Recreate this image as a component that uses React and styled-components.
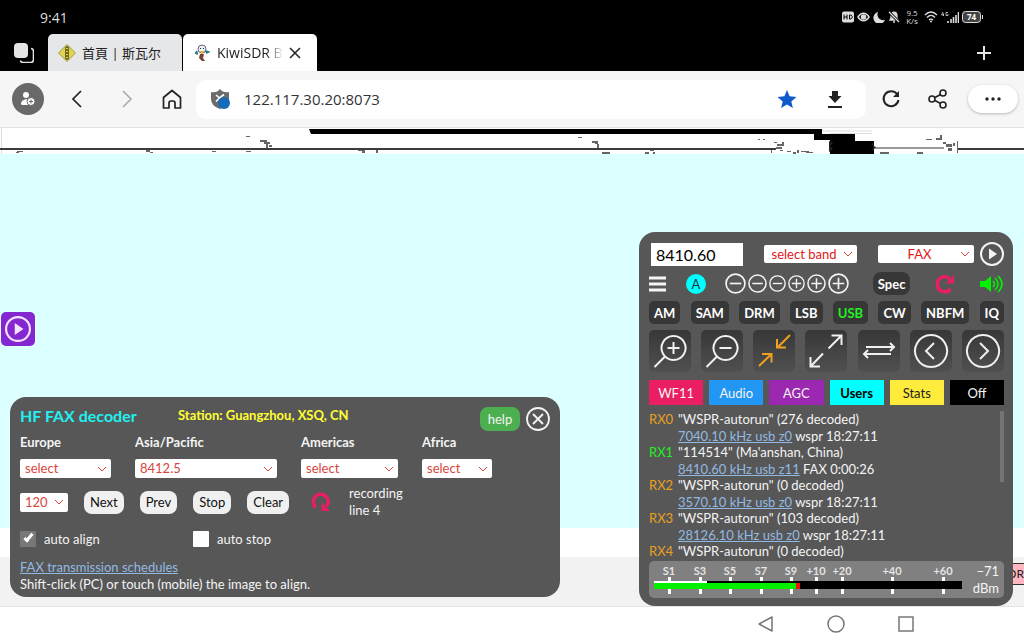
import React, { useState } from "react";
import styled, { createGlobalStyle, css } from "styled-components";

const theme = {
  colors: {
    panel: "#575757",
    dark: "#373737",
    image: "#dcffff",
    link: "#92b9e2",
    select: "#d8453c",
    pink: "#e91e63",
    orange: "#f0a020",
    green: "#22f022"
  },
  ui: '"Lato", "Liberation Sans", sans-serif',
  browser: '"Open Sans", "Noto Sans CJK TC", sans-serif'
};

const GlobalStyle = createGlobalStyle`
  *, *::before, *::after { box-sizing: border-box; }
  body { margin: 0; background: #fff; }
  button, input, select { font: inherit; margin: 0; }
  button { border: 0; padding: 0; background: none; color: inherit; }
  svg { display: block; flex: none; }
`;

const Page = styled.div`
  min-height: 100vh;
  display: flex;
  flex-direction: column;
  font-family: ${theme.ui};
  font-size: 13px;
`;

/* ---- phone and browser chrome ---- */

const StatusBar = styled.div`
  height: 34px;
  padding: 0 40px;
  display: flex;
  align-items: center;
  justify-content: space-between;
  background: #000;
  color: #ddd;
  font-family: ${theme.browser};
`;

const Clock = styled.span`
  font-size: 14px;
`;

const StatusIcons = styled.div`
  display: flex;
  align-items: center;
  gap: 3px;
`;

const Speed = styled.span`
  width: 18px;
  font-size: 8px;
  line-height: 8px;
  text-align: center;
`;

const TabStrip = styled.div`
  height: 37px;
  padding: 0 32px 0 14px;
  display: flex;
  align-items: center;
  background: #000;
  color: #e4e4e4;
`;

const Tabs = styled.div`
  flex: 1;
  align-self: stretch;
  display: flex;
  gap: 1px;
  padding-left: 14px;
`;

const Tab = styled.div`
  width: 134px;
  display: flex;
  align-items: center;
  gap: 6px;
  padding: 0 16px 0 10px;
  border-radius: 5px 5px 0 0;
  background: ${props => (props.$active ? "#fff" : "#e6e7e9")};
  color: #222;
  font-family: ${theme.browser};
  font-size: ${props => (props.$active ? 14 : 13)}px;
`;

const TabTitle = styled.span`
  flex: 1;
  overflow: hidden;
  white-space: nowrap;
  ${props =>
    props.$fade &&
    css`
      mask-image: linear-gradient(90deg, #000 75%, transparent);
    `}
`;

const Toolbar = styled.div`
  height: 57px;
  padding: 0 6px 0 12px;
  display: flex;
  align-items: center;
  background: #f6f6f6;
  color: #222;
  border-bottom: 1px solid #e2e2e2;
`;

const NavButtons = styled.div`
  display: flex;
  align-items: center;
  gap: 26px;
  padding-right: 14px;
`;

const Avatar = styled.button`
  width: 32px;
  height: 32px;
  display: grid;
  place-items: center;
  border-radius: 50%;
  background: #696969;
  color: #fff;
`;

const AddressBar = styled.div`
  flex: 1;
  height: 39px;
  padding: 0 20px 0 14px;
  display: flex;
  align-items: center;
  gap: 14px;
  border-radius: 10px;
  background: #fff;
`;

const Address = styled.input`
  flex: 1;
  min-width: 0;
  border: 0;
  padding: 0;
  color: #333;
  background: none;
  font-family: ${theme.browser};
  font-size: 15px;
`;

const AddressActions = styled.div`
  display: flex;
  gap: 26px;
`;

const PageActions = styled.div`
  display: flex;
  align-items: center;
  gap: 27px;
  padding: 0 20px 0 15px;
`;

const MoreButton = styled.button`
  width: 50px;
  height: 28px;
  display: grid;
  place-items: center;
  border-radius: 14px;
  background: #fff;
  box-shadow: 0 1px 3px rgba(0, 0, 0, 0.25);
`;

const SystemNav = styled.nav`
  height: 34px;
  padding-right: 109px;
  display: flex;
  align-items: center;
  justify-content: flex-end;
  gap: 52px;
  color: #777;
  background: #fff;
  border-top: 1px solid #e4e4e4;
`;

/* ---- receiver page ---- */

const Receiver = styled.main`
  position: relative;
  flex: 1;
  min-height: 478px;
  display: flex;
  flex-direction: column;
  overflow: hidden;
`;

const FaxImage = styled.div`
  flex: 1;
  background: ${theme.colors.image};
`;

const Scale = styled.div`
  height: ${props => props.$height}px;
  background: ${props => props.$color};
`;

const PlayTab = styled.button`
  position: absolute;
  left: 1px;
  top: 184px;
  width: 34px;
  height: 34px;
  display: grid;
  place-items: center;
  border-radius: 5px;
  background: #8427d0;
  color: #f4e4ff;
`;

const BandLabel = styled.span`
  position: absolute;
  right: 0;
  bottom: 21px;
  border: solid #333;
  border-width: 1px 0;
  background: #ffb6c1;
  color: #222;
  font-size: 12px;
  line-height: 20px;
`;

const Panel = styled.section`
  position: absolute;
  border-radius: 16px;
  background: ${theme.colors.panel};
  color: #f4f4f4;
`;

const FaxPanel = styled(Panel)`
  left: 10px;
  bottom: 9px;
  width: 550px;
  padding: 10px 10px 4px;
`;

const FaxHeader = styled.header`
  display: grid;
  grid-template-columns: 158px 1fr auto auto;
  gap: 0 6px;
  height: 24px;
`;

const FaxTitle = styled.h1`
  margin: 0;
  color: #22f0f0;
  font-size: 16px;
  line-height: 18px;
`;

const Station = styled.strong`
  margin-left: -6px;
  color: #ffff33;
  line-height: 16px;
`;

const HelpButton = styled.button`
  width: 40px;
  height: 24px;
  border-radius: 8px;
  background: #4caf50;
`;

const Regions = styled.div`
  display: flex;
  gap: 24px;
  padding-top: 3px;
`;

const Region = styled.label`
  width: ${props => props.$width}px;
  display: flex;
  flex-direction: column;
  gap: 8px;
  font-weight: bold;
  line-height: 17px;
`;

const SelectBox = styled.span`
  display: grid;
  align-items: center;
  width: ${props => (props.$width ? `${props.$width}px` : "auto")};
  color: ${theme.colors.select};
  font-weight: normal;

  > * {
    grid-area: 1 / 1;
  }

  svg {
    justify-self: end;
    margin-right: 4px;
    pointer-events: none;
  }
`;

const SelectControl = styled.select`
  appearance: none;
  width: 100%;
  height: ${props => (props.$slim ? 18 : 19)}px;
  padding: 0 ${props => (props.$slim ? 18 : 5)}px 0 5px;
  border: 0;
  border-radius: 2px;
  background: #fff;
  color: ${props => (props.$slim ? "#e01818" : "inherit")};
  text-align-last: ${props => (props.$slim ? "center" : "left")};
`;

const FaxControls = styled.div`
  display: flex;
  align-items: center;
  gap: 16px;
  height: 34px;
  margin-top: 7px;
`;

const PillButton = styled.button`
  height: 23px;
  padding: 0 6px;
  border-radius: 8px;
  background: #f0f0f0;
  color: #111;
`;

const Progress = styled.div`
  display: flex;
  align-items: center;
  gap: 17px;
  padding-left: 5px;
  line-height: 17px;
`;

const Options = styled.div`
  display: grid;
  grid-template-columns: 173px 1fr;
  margin-top: 12px;
`;

const Option = styled.label`
  display: flex;
  align-items: center;
  gap: 8px;
  line-height: 16px;
`;

const Checkbox = styled.input`
  appearance: none;
  width: 16px;
  height: 16px;
  border-radius: 1px;
  background: #fff;

  &:checked {
    background: #787878;
  }

  &:checked::before {
    content: "";
    display: block;
    width: 5px;
    height: 10px;
    margin: 1px 6px;
    border: solid #fff;
    border-width: 0 3px 3px 0;
    transform: rotate(40deg);
  }
`;

const Link = styled.a`
  color: ${theme.colors.link};
  text-decoration: underline;
`;

const Notes = styled.p`
  margin: 12px 0 0;
  line-height: 17px;
`;

const ControlPanel = styled(Panel)`
  right: 11px;
  bottom: 0;
  width: 374px;
  padding: 10px 9px 8px 10px;
`;

const ControlRow = styled.div`
  display: flex;
  align-items: center;
  justify-content: space-between;
  margin-bottom: ${props => props.$space || 6}px;
`;

const FrequencyInput = styled.input`
  width: 92px;
  height: 23px;
  margin: 0 0 0 2px;
  padding: 0 5px;
  border: 0;
  background: #fff;
  color: #000;
  font-size: 16px;
`;

const ControlGroup = styled.div`
  display: flex;
  align-items: center;
  gap: ${props => props.$gap}px;
`;

const AutoButton = styled.button`
  width: 20px;
  height: 20px;
  border-radius: 50%;
  background: #00ffff;
  color: #234;
`;

const DarkButton = styled.button`
  height: 23px;
  padding: 0 5px;
  border-radius: ${props => (props.$round ? 8 : 5)}px;
  background: ${theme.colors.dark};
  color: ${props => (props.$on ? theme.colors.green : "#fff")};
  font-weight: bold;
`;

const ToolButton = styled.button`
  width: 42px;
  height: 42px;
  display: grid;
  place-items: center;
  border-radius: 5px;
  background: linear-gradient(#373737, #505050);
  color: ${props => (props.$on ? theme.colors.orange : "#f0f0f0")};
`;

const PanelTabs = styled.div`
  display: grid;
  grid-template-columns: repeat(6, 1fr);
  gap: 6px;
  margin-bottom: 6px;
`;

const PanelTab = styled.button`
  height: 25px;
  background: ${props => props.$bg};
  color: ${props => props.$color || "#f4f4f4"};
  font-weight: ${props => (props.$on ? "bold" : "normal")};
`;

const UserList = styled.ul`
  position: relative;
  height: 150px;
  margin: 0;
  padding: 0;
  list-style: none;
  overflow: hidden;

  &::after {
    content: "";
    position: absolute;
    top: 0;
    right: 0;
    width: 4px;
    height: 71px;
    background: #747474;
  }
`;

const User = styled.li`
  display: grid;
  grid-template-columns: 29px 1fr;
  grid-template-rows: 17px 16px;
  line-height: 17px;
`;

const Channel = styled.span`
  color: ${props => (props.$self ? theme.colors.green : "#e8a020")};
`;

const UserDetail = styled.span`
  grid-column: 2;
`;

const Meter = styled.div`
  display: flex;
  align-items: center;
  justify-content: space-between;
  height: 37px;
  padding: 0 5px;
  border-radius: 5px;
  background: #808080;
`;

const MeterValue = styled.div`
  line-height: 17px;
  text-align: right;
`;

/* ---- icons ---- */

const Icon = ({ size = 20, width, height, box, stroke = 2, fill = "none", children }) => (
  <svg
    width={width || size}
    height={height || size}
    viewBox={box || `0 0 ${width || size} ${height || size}`}
    fill={fill}
    stroke={stroke ? "currentColor" : "none"}
    strokeWidth={stroke || 1}
    aria-hidden="true"
  >
    {children}
  </svg>
);

const Chevron = () => (
  <Icon width={10} height={8} stroke={1}>
    <path d="M1 2l4 4 4-4" />
  </Icon>
);

const PlayCircle = ({ size = 24 }) => (
  <Icon size={size} box="0 0 24 24">
    <circle cx="12" cy="12" r="11" />
    <path d="M9 6.500l8 5.500-8 5.500z" fill="currentColor" stroke="none" />
  </Icon>
);

const RestartIcon = ({ turned }) => (
  <Icon size={22} stroke={0}>
    <g transform={turned ? "rotate(90 11 11)" : undefined}>
      <path d="M15.500 5.500a7.500 7.500 0 1 0 1 10.500" stroke={theme.colors.pink} strokeWidth="3.600" />
      <path d="M20 2v8.500h-8.500z" fill={theme.colors.pink} />
    </g>
  </Icon>
);

const StepIcon = ({ size, plus }) => (
  <Icon size={size} stroke={1.6} box="0 0 20 20">
    <circle cx="10" cy="10" r="9" />
    <path d={plus ? "M4.500 10h11M10 4.500v11" : "M4.500 10h11"} />
  </Icon>
);

const toolIcons = {
  "zoom in": <path d="M13 23.500L2.500 34M15.500 15h12M21.500 9v12M21.500 3a12 12 0 1 0 .1 0z" />,
  "zoom out": <path d="M13 23.500L2.500 34M15.500 15h12M21.500 3a12 12 0 1 0 .1 0z" />,
  "max in": <path d="M34 2L21.500 14.500M21 6v8.500h9M3 33l12.500-12M6 21h9.500v8.500" />,
  "max out": <path d="M20.500 15.500L33.500 2.500M23.500 2.500h10V12M15 20.500L3 33M2.500 24v9.500H12" />,
  passband: <path d="M5 14h28M29 10l4 4-4 4M30 21H3M7 17l-4 4 4 4" />,
  left: <path d="M18 2a16 16 0 1 0 .1 0zM21 10l-8 8 8 8" />,
  right: <path d="M18 2a16 16 0 1 0 .1 0zM15 10l8 8-8 8" />
};

const StatusGlyphs = () => (
  <StatusIcons>
    <Icon size={12} stroke={0}>
      <rect width="12" height="11" y=".5" rx="2" fill="#ddd" />
      <path d="M2 3.500v5M5 3.500v5M2 6h3M7.500 4v4h.5c3 0 3-4 0-4z" stroke="#000" />
    </Icon>
    <Icon width={13} height={12} stroke={1.5}>
      <path d="M1 6c3-5 8-5 11 0-3 5-8 5-11 0z" />
      <circle cx="6.500" cy="6" r="2" fill="currentColor" />
    </Icon>
    <Icon size={12} stroke={0}>
      <path d="M5 1a6 6 0 1 0 7 8C7 10 3 6 5 1z" fill="currentColor" />
    </Icon>
    <Icon size={12} stroke={1.3}>
      <path d="M2 9l1-2V5c0-5 6-5 6 0v2l1 2z" fill="currentColor" />
      <path d="M1 1l10 10" stroke="#000" strokeWidth="3" />
      <path d="M1 1l10 10M5 11h2" />
    </Icon>
    <Speed>9.5 K/s</Speed>
    <Icon width={14} height={12} stroke={1.4}>
      <path d="M1 4c4-4 8-4 12 0M3 6.500c3-3 5-3 8 0M5 9c1-1 3-1 4 0" />
      <circle cx="7" cy="10.500" r="1" fill="currentColor" stroke="none" />
    </Icon>
    <Icon width={18} height={12} stroke={1.6}>
      <path d="M7 12v-2M10 12V8M12.500 12V6M15 12V4M17.500 12V1" />
      <path d="M2 1L.5 4H3M2.500 2.500V5M7 1.500H5V4.500h2V3" strokeWidth=".8" />
    </Icon>
    <Icon width={22} height={12} stroke={0}>
      <rect x=".5" y=".5" width="18" height="11" rx="3" fill="#444" stroke="currentColor" />
      <text x="9.500" y="9" fill="#fff" fontSize="8" fontWeight="bold" textAnchor="middle">
        74
      </text>
      <path d="M20.500 4v4" stroke="currentColor" />
    </Icon>
  </StatusIcons>
);

const specks = [
  [246, 8, 4, 1], [260, 12, 7, 2], [264, 14, 6, 2], [266, 16, 2, 4], [269, 17, 3, 2],
  [17, 23, 6, 1], [16, 24, 3, 1], [146, 22, 4, 2], [150, 24, 3, 1], [212, 23, 4, 1],
  [246, 23, 5, 1], [358, 22, 7, 1], [362, 23, 3, 2], [376, 22, 2, 3], [578, 9, 4, 1],
  [592, 13, 6, 2], [595, 15, 3, 1], [597, 16, 2, 4], [602, 24, 8, 2], [645, 24, 4, 2],
  [650, 22, 4, 1], [653, 24, 2, 2], [758, 11, 2, 1], [763, 11, 2, 1], [774, 14, 3, 1],
  [777, 16, 5, 2], [782, 14, 2, 4], [776, 19, 6, 2], [771, 22, 1, 3], [780, 22, 3, 1],
  [787, 23, 4, 1], [793, 24, 3, 2], [797, 22, 2, 3], [801, 23, 8, 1], [806, 24, 7, 1],
  [880, 24, 9, 2], [917, 24, 6, 2], [926, 11, 6, 1], [936, 10, 6, 2], [940, 7, 2, 4],
  [943, 14, 3, 2], [946, 16, 6, 3], [953, 15, 2, 3], [948, 20, 4, 3], [957, 13, 1, 12]
];

const FaxStrip = () => (
  <svg width="100%" height="26" viewBox="0 0 1024 26" preserveAspectRatio="none" aria-hidden="true">
    <rect width="1024" height="26" fill="#fefefe" />
    <path d="M1.500 0v26M822 3h50M830 5.500h42" stroke="#ddd" />
    <path d="M0 21h776M958 21h66" stroke="#3c3c3c" strokeWidth="2" />
    <path d="M874 20h70" stroke="#999" strokeWidth="2" />
    <path d="M309 1h513v5h33v7h19v13h-44V12h-16V6H311z" fill="#000" />
    <path d="M829 13l4 2-3 3 3 3-4 3zM874 14l-3 3 5 2-4 4z" fill="#222" />
    {specks.map(([x, y, w, h]) => (
      <rect key={`${x}-${y}`} x={x} y={y} width={w} height={h} fill="#666" />
    ))}
  </svg>
);

const ticks = [
  ["S1", 15], ["S3", 46], ["S5", 76], ["S7", 107], ["S9", 137],
  ["+10", 162], ["+20", 188], ["+40", 238], ["+60", 289]
];

const SMeter = () => (
  <svg width="309" height="37" viewBox="0 0 309 37" role="img" aria-label="S-meter">
    {ticks.map(([label, x]) => (
      <g key={label}>
        <text x={x} y="14" fill="#e4e4e4" fontSize="11" fontWeight="bold" textAnchor="middle">
          {label}
        </text>
        <path d={`M${x + 0.5} 16v17`} stroke="#fff" strokeWidth="3" />
      </g>
    ))}
    <rect y="20" width="308" height="8" fill="#000" />
    <rect y="20" width="53" height="2" fill="#fff" />
    <rect y="22" width="142" height="6" fill="#00f000" />
    <rect x="142" y="22" width="4" height="6" fill="#f01010" />
  </svg>
);

/* ---- data ---- */

const regions = [
  { name: "Europe", value: "select", width: 91 },
  { name: "Asia/Pacific", value: "8412.5", width: 142 },
  { name: "Americas", value: "select", width: 97 },
  { name: "Africa", value: "select", width: 70 }
];

const modes = ["AM", "SAM", "DRM", "LSB", "USB", "CW", "NBFM", "IQ"];

const steps = [
  { size: 21 }, { size: 19 }, { size: 17 },
  { size: 17, plus: true }, { size: 19, plus: true }, { size: 21, plus: true }
];

const panelTabs = [
  { name: "WF11", bg: "#e91e63" },
  { name: "Audio", bg: "#2196f3" },
  { name: "AGC", bg: "#9c27b0" },
  { name: "Users", bg: "#00ffff", color: "#000" },
  { name: "Stats", bg: "#ffeb3b", color: "#222" },
  { name: "Off", bg: "#000" }
];

const users = [
  { name: '"WSPR-autorun" (276 decoded)', freq: "7040.10 kHz usb z0", info: "wspr 18:27:11" },
  { name: '"114514" (Ma\'anshan, China)', freq: "8410.60 kHz usb z11", info: "FAX 0:00:26", self: true },
  { name: '"WSPR-autorun" (0 decoded)', freq: "3570.10 kHz usb z0", info: "wspr 18:27:11" },
  { name: '"WSPR-autorun" (103 decoded)', freq: "28126.10 kHz usb z0", info: "wspr 18:27:11" },
  { name: '"WSPR-autorun" (0 decoded)' }
];

/* ---- components ---- */

const Select = ({ value, width, slim, label }) => (
  <SelectBox $width={width}>
    <SelectControl defaultValue={value} $slim={slim} aria-label={label}>
      <option>{value}</option>
    </SelectControl>
    <Chevron />
  </SelectBox>
);

const Browser = () => (
  <>
    <StatusBar>
      <Clock>9:41</Clock>
      <StatusGlyphs />
    </StatusBar>
    <TabStrip>
      <Icon size={20} stroke={1.6}>
        <path d="M17 5.500q2.500 0 2.500 3v8q0 3-3 3h-7q-3 0-3-2" />
        <rect width="14" height="15" rx="4" fill="currentColor" stroke="none" />
      </Icon>
      <Tabs>
        <Tab>
          <Icon size={18} stroke={0}>
            <path d="M9 .5L17.500 9 9 17.500.5 9z" fill="#e2d44e" stroke="#a39a48" />
            <rect x="7" y="2" width="4" height="14" rx="2" fill="#6e6a22" />
            <path d="M8 4.500h2M8 7.500h2M8 10.500h2M8 13.500h2" stroke="#e2d44e" />
          </Icon>
          <TabTitle>首頁 | 斯瓦尔</TabTitle>
        </Tab>
        <Tab $active>
          <Icon size={18} stroke={0}>
            <circle cx="9" cy="5" r="4" fill="#e9f1f4" stroke="#667" />
            <path d="M4 7l-1 2 2 1M12 7l3 1-2 1" stroke="#378" strokeWidth="2" />
            <path d="M7 4.500h1M10 4.500h1" stroke="#222" />
            <path d="M7 7h4l-1 3H8z" fill="#e5b341" />
            <path d="M7 10h4l-1 4 2 3H9l-3-3z" fill="#764236" />
          </Icon>
          <TabTitle $fade>KiwiSDR B</TabTitle>
          <button aria-label="Close tab">
            <Icon size={12} stroke={1.5}>
              <path d="M1 1l10 10M11 1L1 11" />
            </Icon>
          </button>
        </Tab>
      </Tabs>
      <button aria-label="New tab">
        <Icon size={16}>
          <path d="M1 8h14M8 1v14" />
        </Icon>
      </button>
    </TabStrip>
    <Toolbar>
      <NavButtons>
        <Avatar aria-label="Profile">
          <Icon size={16} stroke={0}>
            <circle cx="6" cy="4" r="3" fill="currentColor" />
            <path d="M1 13c0-6 10-6 10-2v3H3q-2 0-2-1z" fill="currentColor" />
            <circle cx="11" cy="10.500" r="4" fill="currentColor" stroke="#696969" />
            <path d="M11 8.500v4M9 10.500h4" stroke="#696969" />
          </Icon>
        </Avatar>
        <button aria-label="Back">
          <Icon size={20} stroke={1.7}>
            <path d="M11 2L3 10l8 8" />
          </Icon>
        </button>
        <button aria-label="Forward">
          <Icon size={20} stroke={0}>
            <path d="M7 2l8 8-8 8" stroke="#aaa" strokeWidth="1.600" />
          </Icon>
        </button>
        <button aria-label="Home">
          <Icon size={20} stroke={1.7}>
            <path d="M1.500 8.500L10 1.500l8.500 7V19h-5.500v-5q0-2-2-2h-2q-2 0-2 2v5H1.500z" strokeLinejoin="round" />
          </Icon>
        </button>
      </NavButtons>
      <AddressBar>
        <Icon width={20} height={22} stroke={0}>
          <path d="M10 1l2 2q3 2 7 1v7q0 7-9 10-9-3-9-10V4q4 1 7-1z" fill="#6b6b6b" />
          <path d="M6 7l3.500 3L14 6.500M9.500 10L6 13.500" stroke="#fff" strokeWidth="1.600" />
          <circle cx="14" cy="15" r="6" fill="#1769ba" />
        </Icon>
        <Address aria-label="Address" defaultValue="122.117.30.20:8073" />
        <AddressActions>
          <button aria-label="Favorite">
            <Icon width={22} height={20} stroke={0}>
              <path d="M11 1l2.600 6.300 6.900.6-5.200 4.500 1.600 6.600-5.900-3.500L5.100 19l1.600-6.600L1.500 7.900l6.900-.6z" fill="#0f5bcb" />
            </Icon>
          </button>
          <button aria-label="Downloads">
            <Icon width={22} height={20} stroke={0} fill="currentColor">
              <path d="M8 2h6v5h3.500L11 14 4.500 7H8zM4 17h14v2H4z" />
            </Icon>
          </button>
        </AddressActions>
      </AddressBar>
      <PageActions>
        <button aria-label="Reload">
          <Icon size={20}>
            <path d="M16 5a7.500 7.500 0 1 0 1.500 6" />
            <path d="M18 2v6h-6z" fill="currentColor" stroke="none" />
          </Icon>
        </button>
        <button aria-label="Share">
          <Icon size={20} stroke={1.6}>
            <circle cx="4" cy="10" r="3" />
            <circle cx="15" cy="4" r="3" />
            <circle cx="15" cy="16" r="3" />
            <path d="M7 8.500l5.500-3M7 11.500l5.500 3" />
          </Icon>
        </button>
      </PageActions>
      <MoreButton aria-label="More">
        <Icon width={16} height={4} stroke={0} fill="currentColor">
          <circle cx="2" cy="2" r="1.700" />
          <circle cx="8" cy="2" r="1.700" />
          <circle cx="14" cy="2" r="1.700" />
        </Icon>
      </MoreButton>
    </Toolbar>
  </>
);

const FaxDecoder = () => (
  <FaxPanel>
    <FaxHeader>
      <FaxTitle>HF FAX decoder</FaxTitle>
      <Station>Station: Guangzhou, XSQ, CN</Station>
      <HelpButton>help</HelpButton>
      <button aria-label="Close">
        <Icon size={24} stroke={1.8}>
          <circle cx="12" cy="12" r="11" />
          <path d="M7 7l10 10M17 7L7 17" />
        </Icon>
      </button>
    </FaxHeader>
    <Regions>
      {regions.map(region => (
        <Region key={region.name} $width={region.width}>
          {region.name}
          <Select value={region.value} label={region.name} />
        </Region>
      ))}
    </Regions>
    <FaxControls>
      <Select value="120" width={48} label="Lines per minute" />
      {["Next", "Prev", "Stop", "Clear"].map(name => (
        <PillButton key={name}>{name}</PillButton>
      ))}
      <Progress>
        <RestartIcon turned />
        <span>
          recording
          <br />
          line 4
        </span>
      </Progress>
    </FaxControls>
    <Options>
      <Option>
        <Checkbox type="checkbox" defaultChecked />
        auto align
      </Option>
      <Option>
        <Checkbox type="checkbox" />
        auto stop
      </Option>
    </Options>
    <Notes>
      <Link href="#schedules">FAX transmission schedules</Link>
      <br />
      Shift-click (PC) or touch (mobile) the image to align.
    </Notes>
  </FaxPanel>
);

const Controls = () => {
  const [mode, setMode] = useState("USB");
  const [tab, setTab] = useState("Users");

  return (
    <ControlPanel>
      <ControlRow>
        <FrequencyInput aria-label="Frequency" defaultValue="8410.60" />
        <Select slim value="select band" width={93} label="Band" />
        <ControlGroup $gap={6}>
          <Select slim value="FAX" width={96} label="Extension" />
          <button aria-label="Play">
            <PlayCircle />
          </button>
        </ControlGroup>
      </ControlRow>
      <ControlRow>
        <ControlGroup $gap={19}>
          <button aria-label="Menu">
            <Icon size={18} stroke={3}>
              <path d="M0 3h17M0 9h17M0 15h17" />
            </Icon>
          </button>
          <AutoButton>A</AutoButton>
          <ControlGroup $gap={2}>
            {steps.map((step, i) => (
              <button key={i} aria-label={step.plus ? "Step up" : "Step down"}>
                <StepIcon size={step.size} plus={step.plus} />
              </button>
            ))}
          </ControlGroup>
        </ControlGroup>
        <DarkButton $round>Spec</DarkButton>
        <button aria-label="Restart">
          <RestartIcon />
        </button>
        <button aria-label="Mute">
          <Icon width={24} height={20} stroke={0}>
            <path d="M0 7h5l6-5v16l-6-5H0z" fill="#00f000" />
            <path d="M13 7q3 3 0 6M15 4q6 6 0 12M18 2q8 8 0 16" stroke="#00f000" strokeWidth="1.600" />
          </Icon>
        </button>
      </ControlRow>
      <ControlRow>
        {modes.map(name => (
          <DarkButton key={name} $on={name === mode} onClick={() => setMode(name)}>
            {name}
          </DarkButton>
        ))}
      </ControlRow>
      <ControlRow $space={8}>
        {Object.keys(toolIcons).map(name => (
          <ToolButton key={name} $on={name === "max in"} aria-label={name}>
            <Icon size={36}>{toolIcons[name]}</Icon>
          </ToolButton>
        ))}
      </ControlRow>
      <PanelTabs>
        {panelTabs.map(({ name, bg, color }) => (
          <PanelTab key={name} $bg={bg} $color={color} $on={name === tab} onClick={() => setTab(name)}>
            {name}
          </PanelTab>
        ))}
      </PanelTabs>
      <UserList>
        {users.map((user, i) => (
          <User key={i}>
            <Channel $self={user.self}>RX{i}</Channel>
            <span>{user.name}</span>
            {user.freq && (
              <UserDetail>
                <Link href="#tune">{user.freq}</Link> {user.info}
              </UserDetail>
            )}
          </User>
        ))}
      </UserList>
      <Meter>
        <SMeter />
        <MeterValue>
          −71
          <br />
          dBm
        </MeterValue>
      </Meter>
    </ControlPanel>
  );
};

const App = () => (
  <Page>
    <GlobalStyle />
    <Browser />
    <Receiver>
      <FaxStrip />
      <FaxImage />
      <Scale $height={29} $color="#fff" />
      <Scale $height={49} $color="#f2f2f2" />
      <PlayTab aria-label="Start audio">
        <PlayCircle size={26} />
      </PlayTab>
      <BandLabel>DR</BandLabel>
      <FaxDecoder />
      <Controls />
    </Receiver>
    <SystemNav>
      <button aria-label="Back">
        <Icon size={18} stroke={1.5}>
          <path d="M15 2v14L2 9z" strokeLinejoin="round" />
        </Icon>
      </button>
      <button aria-label="Home">
        <Icon size={18} stroke={1.5}>
          <circle cx="9" cy="9" r="8" />
        </Icon>
      </button>
      <button aria-label="Recent apps">
        <Icon size={18} stroke={1.5}>
          <rect x="2" y="2" width="14" height="14" />
        </Icon>
      </button>
    </SystemNav>
  </Page>
);

export default App;
